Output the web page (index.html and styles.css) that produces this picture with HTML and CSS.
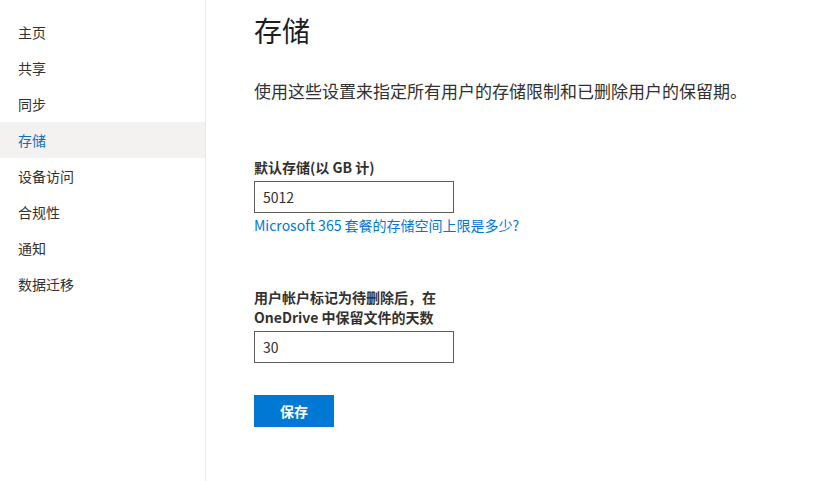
FILE: index.html
```html
<!DOCTYPE html>
<html lang="zh-CN">
<head>
<meta charset="utf-8">
<title>存储</title>
<link rel="stylesheet" href="styles.css">
</head>
<body>
<div class="app">
  <nav class="sidebar">
    <ul class="nav">
      <li class="nav-item">主页</li>
      <li class="nav-item">共享</li>
      <li class="nav-item">同步</li>
      <li class="nav-item active">存储</li>
      <li class="nav-item">设备访问</li>
      <li class="nav-item">合规性</li>
      <li class="nav-item">通知</li>
      <li class="nav-item">数据迁移</li>
    </ul>
  </nav>
  <main class="content">
    <h1 class="title">存储</h1>
    <p class="desc">使用这些设置来指定所有用户的存储限制和已删除用户的保留期。</p>
    <section class="field first">
      <label class="label">默认存储(以 GB 计)</label>
      <input class="input" type="text" value="5012">
      <a class="link" href="#">Microsoft 365 套餐的存储空间上限是多少?</a>
    </section>
    <section class="field second">
      <label class="label">用户帐户标记为待删除后，在<br>OneDrive 中保留文件的天数</label>
      <input class="input" type="text" value="30">
    </section>
    <button class="save">保存</button>
  </main>
</div>
</body>
</html>
```
FILE: styles.css
```css
* { box-sizing: border-box; }
html, body { margin: 0; padding: 0; background: #fff; }
body {
  font-family: "Segoe UI", "Noto Sans CJK SC", sans-serif;
  color: #323130;
  width: 820px;
  height: 481px;
  overflow: hidden;
}
.app { display: flex; height: 481px; }
.sidebar {
  width: 206px;
  flex: none;
  border-right: 1px solid #eaeaea;
  padding-top: 14px;
}
.nav { list-style: none; margin: 0; padding: 0; }
.nav-item {
  height: 36px;
  line-height: 36px;
  padding-left: 18px;
  font-size: 14px;
  color: #323130;
}
.nav-item.active { background: #f3f2f1; color: #106ebe; }
.content { padding-left: 48px; display: flex; flex-direction: column; align-items: flex-start; }
.title {
  margin: 10px 0 0;
  font-size: 28px;
  font-weight: 400;
  line-height: 40px;
  color: #201f1e;
}
.desc {
  margin: 30px 0 0;
  font-size: 17px;
  line-height: 22px;
  color: #323130;
}
.field { display: flex; flex-direction: column; align-items: flex-start; }
.field.first { margin-top: 55px; }
.field.second { margin-top: 53px; }
.label {
  font-size: 14px;
  font-weight: 700;
  line-height: 20px;
  color: #323130;
  margin-bottom: 4px;
}
.input {
  width: 200px;
  height: 32px;
  border: 1px solid #605e5c;
  border-radius: 0;
  padding: 0 8px;
  font-family: inherit;
  font-size: 14px;
  color: #323130;
  outline: none;
}
.link {
  margin-top: 3px;
  font-size: 14px;
  line-height: 18px;
  color: #0078d4;
  text-decoration: none;
}
.save {
  margin-top: 32px;
  width: 80px;
  height: 32px;
  border: none;
  background: #0078d4;
  color: #fff;
  font-family: inherit;
  font-size: 14px;
  font-weight: 700;
}
```
